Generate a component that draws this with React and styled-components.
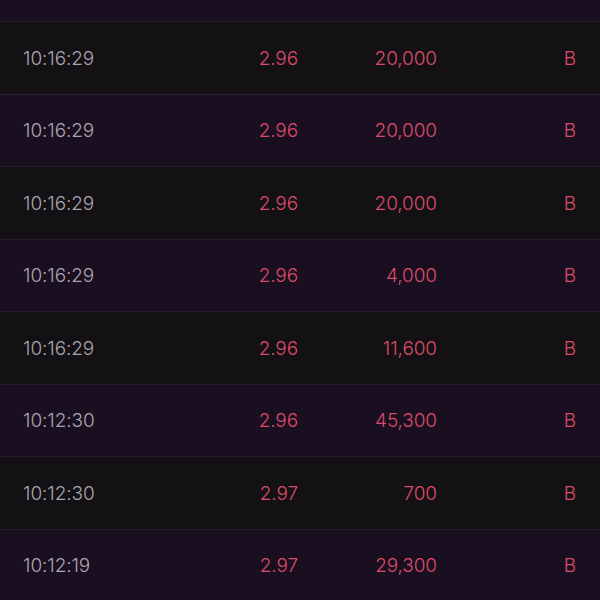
import styled, { createGlobalStyle } from "styled-components";

const trades = [
  { time: "10:16:29", price: "2.96", volume: "20,000", side: "B" },
  { time: "10:16:29", price: "2.96", volume: "20,000", side: "B" },
  { time: "10:16:29", price: "2.96", volume: "20,000", side: "B" },
  { time: "10:16:29", price: "2.96", volume: "4,000", side: "B" },
  { time: "10:16:29", price: "2.96", volume: "11,600", side: "B" },
  { time: "10:12:30", price: "2.96", volume: "45,300", side: "B" },
  { time: "10:12:30", price: "2.97", volume: "700", side: "B" },
  { time: "10:12:19", price: "2.97", volume: "29,300", side: "B" },
];

const GlobalStyle = createGlobalStyle`
  html, body {
    margin: 0;
    padding: 0;
    background: #131114;
  }
  body {
    font-family: Inter, Lato, sans-serif;
  }
`;

const Viewport = styled.div`
  width: 600px;
  height: 600px;
  overflow: hidden;
  background: #131114;
`;

// tail of the row scrolled above the view
const TopEdge = styled.div`
  box-sizing: border-box;
  height: 22px;
  background: #1a0f20;
  border-bottom: 1px solid #261d2d;
`;

const Row = styled.div`
  box-sizing: border-box;
  height: 72.5px;
  display: grid;
  grid-template-columns: 1fr 139px 139px 139px;
  align-items: center;
  padding: 1px 24px 0 23px;
  background: ${(p) => (p.$alt ? "#1a0f20" : "#131114")};
  border-bottom: 1px solid #261d2d;
  font-size: 19px;
  font-weight: 300;
  letter-spacing: -0.1px;
`;

const Time = styled.span`
  color: #aaa4af;
`;

const Cell = styled.span`
  color: #dc4b68;
  text-align: right;
`;

export default function App() {
  return (
    <Viewport>
      <GlobalStyle />
      <TopEdge />
      {trades.map((t, i) => (
        <Row key={i} $alt={i % 2 === 1}>
          <Time>{t.time}</Time>
          <Cell>{t.price}</Cell>
          <Cell>{t.volume}</Cell>
          <Cell>{t.side}</Cell>
        </Row>
      ))}
    </Viewport>
  );
}
